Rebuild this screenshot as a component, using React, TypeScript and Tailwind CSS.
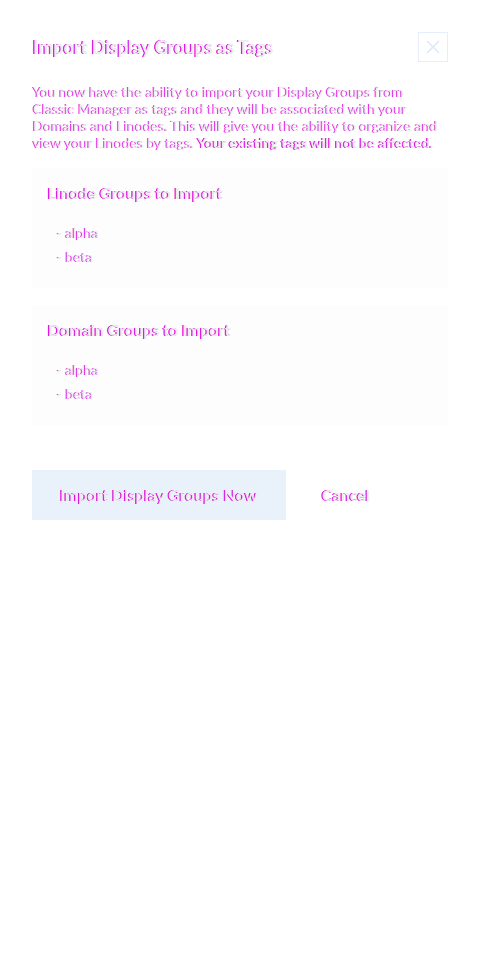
const ink = "text-[#ededed] [text-shadow:-1px_0_0_#d400e0]";
// bold lines carry more of the magenta edge in the reference
const heavy =
  "font-bold text-[#ededed] [text-shadow:-1px_0_0_#d400e0,-1px_-0.5px_0_#d400e0]";

function GroupList({ title, groups }: { title: string; groups: string[] }) {
  return (
    <section className="bg-[#fdfdfd] px-4 pt-[15px] pb-[22px]">
      <h3 className={`text-[16px] leading-5 ${heavy}`}>{title}</h3>
      <ul className="mt-[21px] flex flex-col gap-[6px] pl-[9px] text-[14px] leading-[18px]">
        {groups.map((g) => (
          <li key={g} className={ink}>
            - {g}
          </li>
        ))}
      </ul>
    </section>
  );
}

export default function App() {
  const groups = ["alpha", "beta"];
  return (
    <div className="min-h-[957px] bg-white px-8 pt-8 font-['Lato',sans-serif]">
      <div className="flex items-start justify-between">
        <h2 className={`mt-[3px] pl-px text-[18px] leading-6 ${heavy}`}>
          Import Display Groups as Tags
        </h2>
        <button
          type="button"
          aria-label="Close"
          className="flex h-[30px] w-[30px] items-center justify-center border border-[#e6eefb]"
        >
          <svg width="14" height="14" viewBox="0 0 14 14" fill="none">
            <path d="M1 1L13 13M13 1L1 13" stroke="#dde8fa" strokeWidth="1.5" />
          </svg>
        </button>
      </div>

      <p className={`mt-[21px] pl-px pr-1 text-[14px] leading-[17px] ${ink}`}>
        You now have the ability to import your Display Groups from Classic
        Manager as tags and they will be associated with your Domains and
        Linodes. This will give you the ability to organize and view your
        Linodes by tags.{" "}
        <strong className={heavy}>Your existing tags will not be affected.</strong>
      </p>

      <div className="mt-[17px] flex flex-col gap-[17px]">
        <GroupList title="Linode Groups to Import" groups={groups} />
        <GroupList title="Domain Groups to Import" groups={groups} />
      </div>

      <div className="mt-[45px] flex items-center gap-9">
        <button
          type="button"
          className={`h-[50px] w-[254px] bg-[#e9f2fb] text-[16px] ${heavy}`}
        >
          Import Display Groups Now
        </button>
        <button type="button" className={`text-[16px] ${heavy}`}>
          Cancel
        </button>
      </div>
    </div>
  );
}
